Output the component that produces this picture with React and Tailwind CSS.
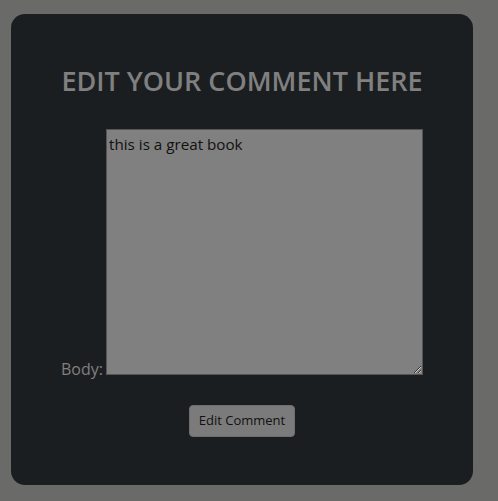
import React, { useState } from 'react'

export default function App() {
  const [body, setBody] = useState('this is a great book')

  return (
    <div className="min-h-screen bg-[#6a6a69] pt-[14px] pl-[11px] font-['Open_Sans',sans-serif]">
      <div className="w-[462px] h-[471px] rounded-[14px] bg-[#1b1e21] flex flex-col items-center">
        <h3 className="mt-[51px] text-[27px] leading-[1.2] font-semibold text-[#808080]">
          EDIT YOUR COMMENT HERE
        </h3>
        <form className="mt-[32px] text-center text-[16px] text-[#808080]" onSubmit={e => e.preventDefault()}>
          <label htmlFor="body" className="mr-[-1px]">Body: </label>
          <textarea
            id="body"
            value={body}
            onChange={e => setBody(e.target.value)}
            className="w-[317px] h-[246px] bg-[#808080] border border-[#555] text-[#111] text-[15.2px] leading-[1.5] px-[2px] py-[3px] align-baseline text-left outline-none"
          />
        </form>
        <button className="mt-[24px] px-[9px] py-[5px] text-[13px] leading-[1.5] text-[#111] bg-[#7b7b7b] border border-[#6e6e6e] rounded-[4px]">
          Edit Comment
        </button>
      </div>
    </div>
  )
}
